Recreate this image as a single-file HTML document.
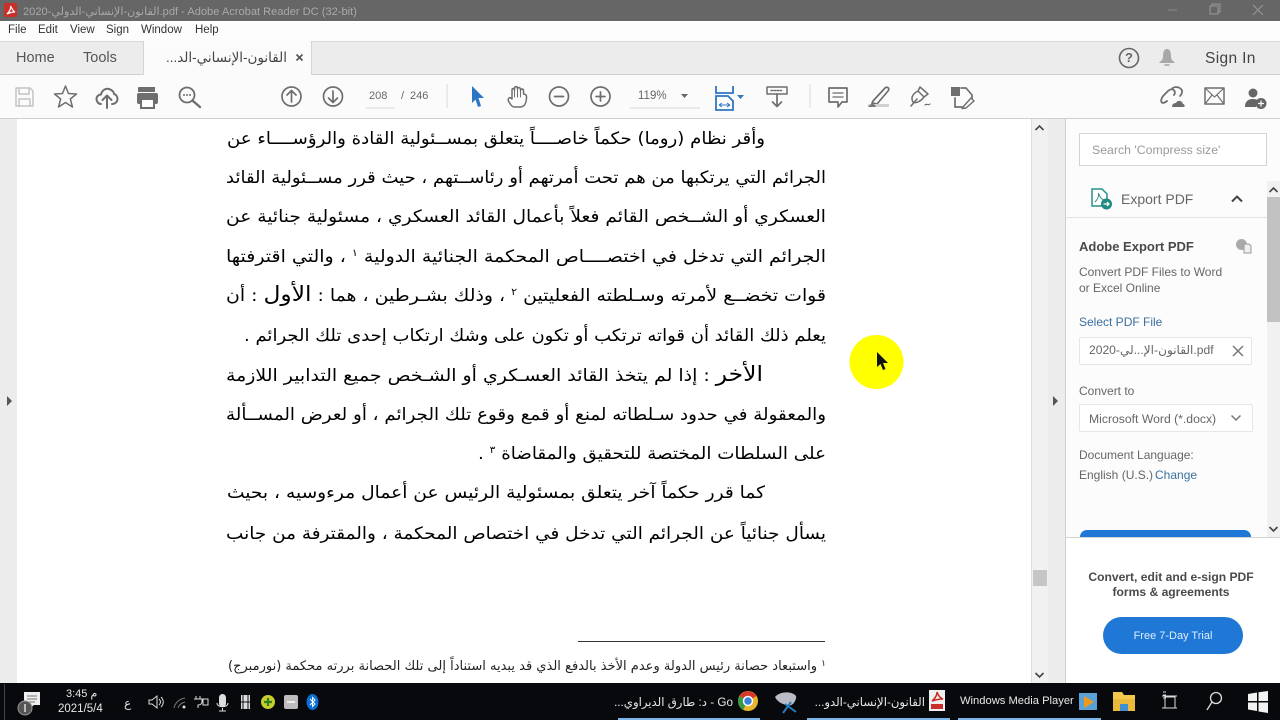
<!DOCTYPE html>
<html lang="en"><head><meta charset="utf-8"><title>Adobe Acrobat Reader DC</title>
<style>
html,body{margin:0;padding:0;width:1280px;height:720px;overflow:hidden;background:#fff}
body{font-family:"Liberation Sans","DejaVu Sans",sans-serif;position:relative}
.a{position:absolute;white-space:nowrap}
.r{direction:rtl;text-align:right}
svg{position:absolute;overflow:visible}
.i{fill:none;stroke:#6e6e6e;stroke-width:2;stroke-linecap:round;stroke-linejoin:round}
.p text{font-family:"DejaVu Sans",sans-serif;fill:#000}
</style></head><body>
<div class="a" style="left:0;top:0;width:1280px;height:21px;background:#666"></div>
<svg style="left:4px;top:3px" width="14" height="14"><rect width="13" height="14" rx="1" fill="#c9302c"/><path d="M3 11C6 8 7 5 6.500 3C8 6 9 8 11 9C8 9 5 10 3 11Z" fill="none" stroke="#fff" stroke-width="1.200"/></svg>
<div class="a" style="left:23px;top:5px;font-size:11.100px;color:#a9a9a9">2020-القانون-الإنساني-الدولي.pdf - Adobe Acrobat Reader DC (32-bit)</div>
<svg style="left:1160px;top:0" width="120" height="21"><path d="M8 10H17" stroke="#8a8a8a"/><rect x="50" y="6" width="8" height="8" fill="none" stroke="#999"/><path d="M52 6V4H60V12H58" fill="none" stroke="#999"/><path d="M93 5L103 15M103 5L93 15" stroke="#999"/></svg>

<div class="a" style="left:0;top:22px;width:1280px;height:19px;background:#fdfdfd;border-bottom:1px solid #d8d8d8"></div>
<div class="a" style="left:8px;top:24px;font-size:11.500px;color:#333">File</div>
<div class="a" style="left:38px;top:24px;font-size:11.500px;color:#333">Edit</div>
<div class="a" style="left:70px;top:24px;font-size:11.500px;color:#333">View</div>
<div class="a" style="left:106px;top:24px;font-size:11.500px;color:#333">Sign</div>
<div class="a" style="left:141px;top:24px;font-size:11.500px;color:#333">Window</div>
<div class="a" style="left:195px;top:24px;font-size:11.500px;color:#333">Help</div>

<div class="a" style="left:0;top:42px;width:1280px;height:32px;background:#ececec;border-bottom:1px solid #cfcfcf"></div>
<div class="a" style="left:143px;top:41px;width:167px;height:34px;background:#fbfbfb;border-left:1px solid #d5d5d5;border-right:1px solid #d5d5d5"></div>
<div class="a" style="left:16px;top:50px;font-size:14.500px;color:#555">Home</div>
<div class="a" style="left:83px;top:50px;font-size:14.500px;color:#555">Tools</div>
<div class="a r" style="left:150px;width:137px;top:50px;font-size:13.500px;color:#444">القانون-الإنساني-الد...</div>
<svg style="left:295px;top:53px" width="9" height="9"><path d="M1.500 1.500L7.500 7.500M7.500 1.500L1.500 7.500" stroke="#555" stroke-width="1.600"/></svg>
<svg style="left:1118px;top:47px" width="22" height="22"><circle cx="11" cy="11" r="9.500" fill="none" stroke="#666" stroke-width="1.600"/></svg>
<div class="a" style="left:1125px;top:50px;font-size:13px;font-weight:bold;color:#666">?</div>
<svg style="left:1158px;top:47px" width="18" height="22"><path d="M9 2C5.500 2 5 6 5 10C5 13 2.500 14 1 16H17C15.500 14 13 13 13 10C13 6 12.500 2 9 2Z" fill="#a8a8a8"/><rect x="6.500" y="17" width="5" height="2" fill="#b5b5b5"/></svg>
<div class="a" style="left:1205px;top:50px;font-size:15.500px;color:#444;letter-spacing:.35px">Sign In</div>

<div class="a" style="left:0;top:75px;width:1280px;height:43px;background:#fbfbfb;border-bottom:1px solid #cfcfcf"></div>
<svg style="left:0;top:75px" width="1280" height="43">
<g class="i">
<path d="M16 13H30L33 16V31H16Z" stroke="#c4c4c4" stroke-width="1.500"/><path d="M19 13V19H29V13M19 31V24H30V31" stroke="#c4c4c4" stroke-width="1.500"/>
<path d="M65.500 11L68.500 18.500L76.500 19L70.300 24L72.500 32L65.500 27.500L58.500 32L60.700 24L54.500 19L62.500 18.500Z" stroke-width="1.500"/>
<path d="M101 29C98 29 96.500 26 96.500 24C96.500 21 99 19.500 101 19.500C102 15 106 13 109 14C112 15 114 17 114 19C116 19.500 117.500 21.500 117.500 24C117.500 26.500 115.500 29 112 29"/><path d="M107 33V21M102.500 25L107 20.500L111.500 25"/>
<circle cx="291.500" cy="21.500" r="9.500" stroke-width="1.700"/><path d="M291.500 27V16M287 20L291.500 15.500L296 20" stroke-width="1.700"/>
<circle cx="333" cy="21.500" r="9.500" stroke-width="1.700"/><path d="M333 16V27M328.500 23L333 27.500L337.500 23" stroke-width="1.700"/>
<circle cx="187" cy="20" r="7.500" stroke-width="1.800"/><path d="M193 26L200 32" stroke-width="2.400"/>
<path d="M511 30C509 27 507 25 509 23C510 22 511 23 512 24V15C512 13 514.500 13 514.500 15V13.500C514.500 11 517.500 11 517.500 13.500V14C517.500 12 520.500 12 520.500 14.500V15.500C520.500 13.500 523.500 13.500 523.500 15.500V19C525.500 19 526.500 20 526.500 22C526.500 27 525 32 520 32H515C513 32 512 31.500 511 30Z" stroke-width="1.500"/>
<path d="M517.500 14V22M520.500 15V22M514.500 15V22" stroke-width="1"/>
<circle cx="559" cy="21.500" r="9.500" stroke-width="1.700"/><path d="M554.500 21.500H563.500" stroke-width="1.700"/>
<circle cx="600.500" cy="21.500" r="9.500" stroke-width="1.700"/><path d="M596 21.500H605M600.500 17V26" stroke-width="1.700"/>
<path d="M767 12H787V19H767Z" stroke-width="1.500"/><path d="M777 19V31M772.500 27L777 31.500L781.500 27" stroke-width="1.700"/>
<path d="M771 15.500H783" stroke-width="1.500" stroke-dasharray="1.500 1.500"/>
<path d="M829 13H847V27H842L838 32V27H829Z" stroke-width="1.700"/><path d="M833 18H843M833 22H843" stroke-width="1.300"/>
<path d="M873 26L885 13C888 11 890 14 888 16L877 29L872 28Z" stroke-width="1.700"/>
<path d="M913 27C910 22 914 18 918 16L924 22C921 26 916 29 913 27ZM918 16L920 12L928 19L924 22M911 31L917 24" stroke-width="1.500"/>
<path d="M925 30C926 28 928 31 930 29" stroke-width="1.200"/>
<path d="M961 13H966L972 20V23M955 23V32H962" stroke-width="1.700"/><path d="M963 32L971 23L974 26L966 33L962 33.500Z" stroke-width="1.400"/>
<path d="M1167 26C1161 31 1159 25 1164 20L1168 16C1172 12 1177 16 1174 20M1172 14C1173 12 1178 11 1181 14C1183 16 1182 19 1180 21" stroke-width="1.800"/>
<rect x="1205" y="13" width="19" height="16" stroke-width="1.500"/><path d="M1205 13L1214.500 22L1224 13M1205 29L1212 20M1224 29L1217 20" stroke-width="1.200"/>
</g>
<path d="M138 17V13C138 12 139 12 140 12H155V17Z" fill="#6e6e6e"/><rect x="137" y="18" width="21" height="11" rx="2" fill="#6e6e6e"/><rect x="141" y="24" width="13" height="9" fill="#fff" stroke="#6e6e6e" stroke-width="2"/>
<circle cx="184" cy="20" r="1" fill="#6e6e6e"/><circle cx="187" cy="20" r="1" fill="#6e6e6e"/><circle cx="190" cy="20" r="1" fill="#6e6e6e"/>
<path d="M472 11L484 23H478.500L481 31L478 32L475.500 24.500L472 28Z" fill="#2d76c4"/>
<path d="M716 11V18H733V11M716 21H728L733 26V35H716Z" fill="none" stroke="#2d76c4" stroke-width="1.800"/><path d="M719 30H730M719 30L722 28M719 30L722 32M730 30L727 28M730 30L727 32" stroke="#2d76c4" stroke-width="1"/>
<path d="M737 20H744L740.500 24Z" fill="#2d76c4"/>
<path d="M681 19H688L684.500 23Z" fill="#666"/>
<path d="M1172 32C1172 29 1174 28 1176 28C1177 25 1182 25 1183 29C1185 29 1185 32 1184 32Z" fill="#6e6e6e"/>
<rect x="951" y="12" width="9" height="9" fill="#6e6e6e"/>
<circle cx="1253" cy="18" r="4.500" fill="#666"/><path d="M1245 32C1245 25 1250 24 1253 24C1256 24 1258 25 1259 27C1257 28 1256 30 1256 32Z" fill="#666"/><circle cx="1261" cy="28.500" r="5.500" fill="#666"/><path d="M1258 28.500H1264M1261 25.500V31.500" stroke="#fff" stroke-width="1.200"/>
<rect x="868" y="29" width="21" height="3" fill="#d2d2d2"/><path d="M868 32L872 28L876 31L875 32Z" fill="#777"/>
<path d="M447 9V33M810 9V33" stroke="#d8d8d8"/>
<path d="M366 33H395M630 33H700" stroke="#d8d8d8"/>
</svg>
<div class="a" style="left:369px;top:90px;font-size:11px;color:#666">208</div>
<div class="a" style="left:401px;top:90px;font-size:11px;color:#666">/</div>
<div class="a" style="left:410px;top:90px;font-size:11px;color:#666">246</div>
<div class="a" style="left:638px;top:90px;font-size:11.500px;color:#666">119%</div>

<div class="a" style="left:0;top:119px;width:17px;height:564px;background:#ececec"></div>
<div class="a" style="left:17px;top:119px;width:1014px;height:564px;background:#fff"></div>
<svg style="left:6px;top:396px" width="7" height="10"><path d="M1 0L6 5L1 10Z" fill="#555"/></svg>

<svg class="p" style="left:0;top:0" width="1280" height="720">
<text x="765" y="144" direction="rtl" font-size="17" textLength="538" lengthAdjust="spacingAndGlyphs">وأقر نظام (روما) حكماً خاصــــاً يتعلق بمســئولية القادة والرؤســــاء عن</text>
<text x="826" y="183" direction="rtl" font-size="17" textLength="600" lengthAdjust="spacingAndGlyphs">الجرائم التي يرتكبها من هم تحت أمرتهم أو رئاســتهم ، حيث قرر مســئولية القائد</text>
<text x="826" y="222" direction="rtl" font-size="17" textLength="600" lengthAdjust="spacingAndGlyphs">العسكري أو الشــخص القائم فعلاً بأعمال القائد العسكري ، مسئولية جنائية عن</text>
<text x="826" y="262" direction="rtl" font-size="17" textLength="600" lengthAdjust="spacingAndGlyphs">الجرائم التي تدخل في اختصــــاص المحكمة الجنائية الدولية <tspan font-size="10" dy="-6">١</tspan><tspan dy="6"> ، والتي اقترفتها</tspan></text>
<text x="826" y="301" direction="rtl" font-size="17" textLength="600" lengthAdjust="spacingAndGlyphs">قوات تخضــع لأمرته وسـلطته الفعليتين <tspan font-size="10" dy="-6">٢</tspan><tspan dy="6"> ، وذلك بشـرطين ، هما : </tspan><tspan font-size="21">الأول</tspan> : أن</text>
<text x="826" y="341" direction="rtl" font-size="17" textLength="582" lengthAdjust="spacingAndGlyphs">يعلم ذلك القائد أن قواته ترتكب أو تكون على وشك ارتكاب إحدى تلك الجرائم .</text>
<text x="763" y="381" direction="rtl" font-size="17" textLength="537" lengthAdjust="spacingAndGlyphs"><tspan font-size="21">الأخر</tspan> : إذا لم يتخذ القائد العسـكري أو الشـخص جميع التدابير اللازمة</text>
<text x="826" y="420" direction="rtl" font-size="17" textLength="600" lengthAdjust="spacingAndGlyphs">والمعقولة في حدود سـلطاته لمنع أو قمع وقوع تلك الجرائم ، أو لعرض المســألة</text>
<text x="826" y="459" direction="rtl" font-size="17" textLength="348" lengthAdjust="spacingAndGlyphs">على السلطات المختصة للتحقيق والمقاضاة <tspan font-size="10" dy="-6">٣</tspan><tspan dy="6"> .</tspan></text>
<text x="765" y="498" direction="rtl" font-size="17" textLength="538" lengthAdjust="spacingAndGlyphs">كما قرر حكماً آخر يتعلق بمسئولية الرئيس عن أعمال مرءوسيه ، بحيث</text>
<text x="826" y="539" direction="rtl" font-size="17" textLength="600" lengthAdjust="spacingAndGlyphs">يسأل جنائياً عن الجرائم التي تدخل في اختصاص المحكمة ، والمقترفة من جانب</text>
<text x="826" y="670" direction="rtl" font-size="13" textLength="598" lengthAdjust="spacingAndGlyphs" style="fill:#222"><tspan font-size="9" dy="-4">١</tspan><tspan dy="4"> واستبعاد حصانة رئيس الدولة وعدم الأخذ بالدفع الذي قد يبديه استناداً إلى تلك الحصانة بررته محكمة (نورمبرج)</tspan></text>
<path d="M578 641.500H825" stroke="#333"/>
</svg>

<svg style="left:850px;top:335px" width="60" height="60"><circle cx="26.500" cy="27" r="27" fill="#ffff00"/><path d="M27 17L27 32L30.500 29L33 35L35.500 34L33 28H38Z" fill="#111"/></svg>

<div class="a" style="left:1031px;top:119px;width:17px;height:564px;background:#f1f1f1;border-left:1px solid #ddd;box-sizing:border-box"></div>
<div class="a" style="left:1033px;top:570px;width:14px;height:16px;background:#c6c6c6"></div>
<svg style="left:1034px;top:124px" width="11" height="8"><path d="M1.500 6L5.500 2L9.500 6" fill="none" stroke="#444" stroke-width="1.600"/></svg>
<svg style="left:1034px;top:671px" width="11" height="8"><path d="M1.500 2L5.500 6L9.500 2" fill="none" stroke="#444" stroke-width="1.600"/></svg>
<div class="a" style="left:1048px;top:119px;width:17px;height:564px;background:#ececec;border-right:1px solid #d0d0d0"></div>
<svg style="left:1052px;top:396px" width="7" height="10"><path d="M1 0L6 5L1 10Z" fill="#555"/></svg>

<div class="a" style="left:1066px;top:119px;width:214px;height:564px;background:#fcfcfc"></div>
<div class="a" style="left:1079px;top:133px;width:186px;height:31px;background:#fff;border:1px solid #d4d4d4"></div>
<div class="a" style="left:1092px;top:143px;font-size:12.300px;color:#9a9a9a">Search 'Compress size'</div>
<div class="a" style="left:1066px;top:217px;width:201px;height:1px;background:#e4e4e4"></div>
<svg style="left:1090px;top:187px" width="24" height="24"><path d="M2 2H12L17 7V19H2Z" fill="#fff" stroke="#2a8f87" stroke-width="1.500"/><path d="M5 15C8 12 9 9 8.500 6C10 10 11 12 14 13" fill="none" stroke="#2a8f87"/><circle cx="16.500" cy="17" r="5.500" fill="#1f8a82"/><path d="M13.500 17H19M17 15L19 17L17 19" fill="none" stroke="#fff" stroke-width="1.300"/></svg>
<div class="a" style="left:1121px;top:191px;font-size:14px;color:#666">Export PDF</div>
<svg style="left:1230px;top:194px" width="14" height="10"><path d="M2 7.500L7 2.500L12 7.500" fill="none" stroke="#444" stroke-width="2"/></svg>
<div class="a" style="left:1079px;top:239px;font-size:13px;font-weight:bold;color:#4a4a4a">Adobe Export PDF</div>
<svg style="left:1235px;top:238px" width="18" height="17"><circle cx="6.500" cy="6.500" r="5.500" fill="#aaa"/><path d="M9 6H14L16 8V15H9Z" fill="#eee" stroke="#999"/></svg>
<div class="a" style="left:1079px;top:265px;font-size:12px;color:#666">Convert PDF Files to Word</div>
<div class="a" style="left:1079px;top:281px;font-size:12px;color:#666">or Excel Online</div>
<div class="a" style="left:1079px;top:315px;font-size:12px;color:#3a6f9f">Select PDF File</div>
<div class="a" style="left:1079px;top:337px;width:171px;height:26px;background:#fff;border:1px solid #e6e6e6;border-radius:2px"></div>
<div class="a" style="left:1089px;top:343px;font-size:12.100px;color:#666">2020-القانون-الإ...لي.pdf</div>
<svg style="left:1232px;top:345px" width="12" height="12"><path d="M1 1L11 11M11 1L1 11" stroke="#777" stroke-width="1.500"/></svg>
<div class="a" style="left:1079px;top:384px;font-size:12px;color:#666">Convert to</div>
<div class="a" style="left:1079px;top:404px;width:172px;height:26px;background:#fff;border:1px solid #e6e6e6;border-radius:2px"></div>
<div class="a" style="left:1089px;top:412px;font-size:12.200px;color:#666">Microsoft Word (*.docx)</div>
<svg style="left:1230px;top:414px" width="12" height="8"><path d="M1.500 1.500L6 6L10.500 1.500" fill="none" stroke="#777" stroke-width="1.500"/></svg>
<div class="a" style="left:1079px;top:448px;font-size:12px;color:#666">Document Language:</div>
<div class="a" style="left:1079px;top:468px;font-size:12px;color:#666">English (U.S.)</div>
<div class="a" style="left:1155px;top:468px;font-size:12px;color:#3a6f9f">Change</div>
<div class="a" style="left:1267px;top:181px;width:13px;height:356px;background:#f1f1f1"></div>
<div class="a" style="left:1267px;top:197px;width:13px;height:125px;background:#c2c2c2"></div>
<svg style="left:1268px;top:186px" width="11" height="8"><path d="M1.500 6L5.500 2L9.500 6" fill="none" stroke="#444" stroke-width="1.600"/></svg>
<svg style="left:1268px;top:525px" width="11" height="8"><path d="M1.500 2L5.500 6L9.500 2" fill="none" stroke="#444" stroke-width="1.600"/></svg>
<div class="a" style="left:1080px;top:530px;width:171px;height:7px;background:#1f78d6;border-radius:14px 14px 0 0"></div>
<div class="a" style="left:1066px;top:537px;width:214px;height:146px;background:#fff;border-top:1px solid #d4d4d4;box-sizing:border-box"></div>
<div class="a" style="left:1064px;top:570px;width:214px;text-align:center;font-size:12.100px;line-height:14.500px;font-weight:bold;color:#4a4a4a;white-space:normal">Convert, edit and e-sign PDF<br>forms &amp; agreements</div>
<div class="a" style="left:1103px;top:617px;width:140px;height:37px;border-radius:19px;background:#1f78d6;color:#dcecff;font-size:11px;line-height:39px;text-align:center">Free 7-Day Trial</div>

<div class="a" style="left:0;top:683px;width:1280px;height:37px;background:#07090c"></div>
<div class="a" style="left:4px;top:684px;width:1px;height:36px;background:#444"></div>
<svg style="left:0;top:683px" width="1280" height="37">
<path d="M24 9H40V22H34L30 25V22H24Z" fill="#eee"/><path d="M27 13H37M27 16H37M27 19H35" stroke="#777"/>
<circle cx="25" cy="25" r="7" fill="#555" stroke="#999"/><path d="M25 21V29" stroke="#ddd" stroke-width="1.500"/>
<path d="M149 17H152L157 13V25L152 21H149Z" fill="none" stroke="#ddd"/><path d="M159 16C161 18 161 20 159 22M161 14C164 17 164 21 161 24" fill="none" stroke="#ddd"/>
<path d="M174 25C175 20 179 16 185 15M178 25C179 22 181 20 185 19" fill="none" stroke="#777"/><circle cx="184" cy="24" r="1.500" fill="#ddd"/>
<path d="M196 16V13M200 16V13M194 16H202V19C202 21 200 22 198 22V25" fill="none" stroke="#ddd"/><rect x="203" y="16" width="5" height="6" fill="none" stroke="#ddd"/>
<rect x="219" y="11" width="7" height="13" rx="3.500" fill="#ddd"/><path d="M217 20C217 25 228 25 228 20M222.500 25V28M219 28H226" fill="none" stroke="#ddd"/>
<rect x="241" y="12" width="9" height="14" fill="#ddd"/><path d="M243 12V26M248 12V26" stroke="#111"/><path d="M241 19H250" stroke="#111"/>
<circle cx="268" cy="19" r="7" fill="#c9cd2b"/><path d="M264 19H272M268 15V23" stroke="#2e7d22" stroke-width="2.200"/>
<rect x="284" y="12" width="14" height="14" rx="2" fill="#bdbdbd"/><path d="M287 19H295" stroke="#eee" stroke-width="2"/>
<ellipse cx="312.500" cy="19" rx="6" ry="8" fill="#0a6fd6"/><path d="M310 16L315 21L312.500 23.500V14.500L315 17L310 22" fill="none" stroke="#fff"/>
<circle cx="748" cy="18" r="10" fill="#e8b52c"/><path d="M748 18L739.500 13A10 10 0 0 1 756.500 13Z" fill="#d8392b"/><path d="M748 18L739.500 13A10 10 0 0 0 743 27Z" fill="#3a9a45"/><circle cx="748" cy="18" r="4.500" fill="#3b7fd9" stroke="#fff" stroke-width="1.500"/>
<path d="M775 14C780 8 792 8 796 13C797 17 792 24 789 22C784 22 778 20 775 14Z" fill="#b9bcc4"/><path d="M785 21L796 29M791 19L783 30" stroke="#2a7bb8" stroke-width="2"/>
<rect x="929" y="7" width="16" height="21" fill="#f0f0f0"/><path d="M932 18C936 15 937 11 937 9C938 12 940 15 943 16C939 16 935 17 932 18Z" fill="none" stroke="#cc2a22" stroke-width="1.500"/><rect x="931" y="21" width="12" height="5" fill="#c9302c"/>
<rect x="1079" y="10" width="18" height="17" fill="#5aa1d6"/><path d="M1084 13L1094 19L1084 25Z" fill="#f09a1c"/>
<path d="M1113 9H1122L1124 12H1135V28H1113Z" fill="#f2c94c"/><rect x="1113" y="16" width="22" height="12" fill="#e9b93a"/><rect x="1120" y="21" width="8" height="7" fill="#3f8fd2"/>
<path d="M1163 9H1166M1163 12H1166M1163 15H1166" stroke="#ddd"/><rect x="1165" y="14" width="10" height="11" fill="none" stroke="#ddd"/><path d="M1162 25H1177M1162 13H1177" stroke="#ddd"/>
<circle cx="1216" cy="15" r="5.500" fill="none" stroke="#ddd" stroke-width="1.300"/><path d="M1212 19L1207 27" stroke="#ddd" stroke-width="1.300"/>
<path d="M1248 11L1257 9.500V18H1248ZM1258.500 9.300L1268 8V18H1258.500ZM1248 19.500H1257V28L1248 26.500ZM1258.500 19.500H1268V30L1258.500 28.500Z" fill="#f2f2f2"/>
<rect x="618" y="35" width="142" height="2" fill="#7db6e8"/><rect x="807" y="35" width="143" height="2" fill="#7db6e8"/><rect x="958" y="35" width="143" height="2" fill="#7db6e8"/>
</svg>
<div class="a" style="left:66px;top:687px;font-size:11px;color:#e8e8e8">م 3:45</div>
<div class="a" style="left:58px;top:703px;font-size:11.500px;color:#e8e8e8">2021/5/4</div>
<div class="a" style="left:124px;top:696px;font-size:12px;color:#ddd">ع</div>
<div class="a r" style="left:590px;width:143px;top:695px;font-size:11.700px;color:#e8e8e8">Go - د: طارق الديراوي...</div>
<div class="a r" style="left:790px;width:135px;top:695px;font-size:11.700px;color:#e8e8e8">القانون-الإنساني-الدو...</div>
<div class="a" style="left:960px;top:695px;font-size:11.200px;color:#e8e8e8">Windows Media Player</div>
</body></html>
